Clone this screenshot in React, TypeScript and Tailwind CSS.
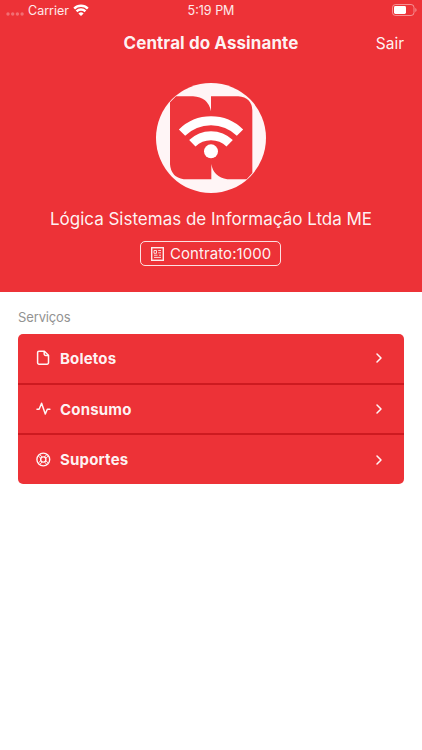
import React from "react";
import { ChevronRight } from "lucide-react";

const services = [
  { label: "Boletos", icon: FileIcon },
  { label: "Consumo", icon: PulseIcon },
  { label: "Suportes", icon: BuoyIcon },
];

function FileIcon() {
  return (
    <svg width="15" height="16" viewBox="0 0 15 16" fill="none" stroke="currentColor" strokeWidth="1.5" strokeLinejoin="round">
      <path d="M3 1.2h5.4l4.1 4.1v7.5a1.4 1.4 0 0 1-1.4 1.4H3a1.4 1.4 0 0 1-1.4-1.4V2.6A1.4 1.4 0 0 1 3 1.2Z" />
      <path d="M8.2 1.4v2.7a1.4 1.4 0 0 0 1.4 1.4h2.7" />
    </svg>
  );
}

function PulseIcon() {
  return (
    <svg width="15" height="16" viewBox="0 0 15 16" fill="none" stroke="currentColor" strokeWidth="1.5" strokeLinecap="round" strokeLinejoin="round">
      <path d="M1 8.2h2.1L5.6 2.2l3.7 10.8 2-4.8h2.6" />
    </svg>
  );
}

function BuoyIcon() {
  return (
    <svg width="15" height="16" viewBox="0 0 15 16" fill="none" stroke="currentColor" strokeWidth="1.4">
      <circle cx="7.3" cy="7.5" r="6.4" />
      <circle cx="7.3" cy="7.5" r="2.6" />
      <path d="M4.8 6.4 2.2 3.8M6.2 5 3.6 2.4M9.8 6.4l2.6-2.6M8.4 5 11 2.4M4.8 8.6l-2.6 2.6M6.2 10l-2.6 2.6M9.8 8.6l2.6 2.6M8.4 10l2.6 2.6" strokeWidth="1" />
    </svg>
  );
}

function StatusBar() {
  return (
    <div className="grid h-5 grid-cols-3 items-center text-[12.5px] leading-5 text-white/90">
      <div className="flex items-center pl-[6px]">
        <svg width="18" height="4" viewBox="0 0 18 4" className="mt-[7px]" fill="white" fillOpacity="0.3">
          <circle cx="2" cy="2" r="1.7" />
          <circle cx="6.7" cy="2" r="1.7" />
          <circle cx="11.4" cy="2" r="1.7" />
          <circle cx="16.1" cy="2" r="1.7" />
        </svg>
        <span className="ml-1 pt-px">Carrier</span>
        <svg width="16" height="12" viewBox="0 0 16 12" className="ml-1 -mt-px" fill="none" stroke="white" strokeWidth="2.5">
          <path d="M1.2 4.6a9.7 9.7 0 0 1 13.6 0" />
          <path d="M3.6 7.4a6.2 6.2 0 0 1 8.8 0" />
          <path d="M8 12 5.4 9.5a3.7 3.7 0 0 1 5.2 0Z" fill="white" stroke="none" />
        </svg>
      </div>
      <span className="pt-px text-center">5:19 PM</span>
      <div className="flex justify-end pr-[5px]">
        <svg width="25" height="12" viewBox="0 0 25 12" className="-mt-px">
          <rect x="0.5" y="0.5" width="21.5" height="11" rx="3" fill="none" stroke="white" strokeOpacity="0.45" />
          <rect x="2" y="2" width="12" height="8" rx="1.4" fill="white" />
          <path d="M23.3 4v4q1.3-.6 1.3-2t-1.3-2Z" fill="white" fillOpacity="0.45" />
        </svg>
      </div>
    </div>
  );
}

function Logo() {
  return (
    <svg width="110" height="110" viewBox="18 21 330 330">
      <circle cx="183" cy="186" r="165" fill="#fff5f6" />
      <path
        d="M78 61H129Q174 63 183 106V61H265Q305 64 307 103V291L290 310H232Q190 303 184 264V310H101Q63 304 60 265V79Z"
        fill="#ee363b"
      />
      <g fill="none" stroke="white" strokeWidth="27">
        <path d="M96 170a124 124 0 0 1 174 0" />
        <path d="M127 202a80 80 0 0 1 112 0" />
      </g>
      <circle cx="183" cy="226" r="21" fill="white" />
    </svg>
  );
}

export default function App() {
  return (
    <div className="flex min-h-[750px] w-full flex-col bg-white font-['Inter',sans-serif]">
      {/* Header */}
      <header className="flex h-[292px] flex-col bg-[#ed3237] text-white/95">
        <StatusBar />
        <div className="grid h-[46px] grid-cols-[1fr_auto_1fr] items-center">
          <span />
          <h1 className="text-[17px] font-bold leading-6 tracking-[0.005em]">Central do Assinante</h1>
          <button className="pr-[18px] pt-px text-right text-[15.5px] leading-6">Sair</button>
        </div>
        <div className="flex flex-col items-center pt-[17px]">
          <Logo />
          <p className="mt-[14px] text-[17px] leading-6">Lógica Sistemas de Informação Ltda ME</p>
          <div className="mr-px mt-[10px] flex h-[25px] w-[141px] items-center rounded-[5px] border border-white/85 pl-[10px]">
            <svg width="13" height="14" viewBox="0 0 13 14" fill="none" stroke="white" strokeOpacity="0.9">
              <rect x="0.7" y="0.7" width="11.6" height="12.6" strokeWidth="1.4" />
              <path d="M3 3.5h2.5v2.8H3zM7.2 3.5H10M7.2 5.8H10M3 8.2h3.5M8 8.2h2M3 10.4h7" strokeWidth="0.9" />
            </svg>
            <span className="ml-[6px] text-[15px] leading-5 tracking-[0.005em]">Contrato:1000</span>
          </div>
        </div>
      </header>

      {/* Services */}
      <main className="px-[18px] pt-4">
        <h2 className="text-[13px] leading-[18px] tracking-[-0.01em] text-[#929292]">Serviços</h2>
        <div className="mt-2 overflow-hidden rounded-[5px] bg-[#ed3237] text-white/95">
          {services.map(({ label, icon: Icon }, idx) => (
            <button
              key={label}
              className={`flex w-full items-center pl-[18px] pr-[17px] ${
                idx < services.length - 1 ? "h-[50.5px] border-b-2 border-[#cd1a20]" : "h-[49px]"
              }`}
            >
              <Icon />
              <span className="ml-[9px] pt-[2px] text-[15px] font-bold tracking-[0.012em]">{label}</span>
              <ChevronRight size={16} strokeWidth={2.3} className="ml-auto" />
            </button>
          ))}
        </div>
      </main>
    </div>
  );
}
